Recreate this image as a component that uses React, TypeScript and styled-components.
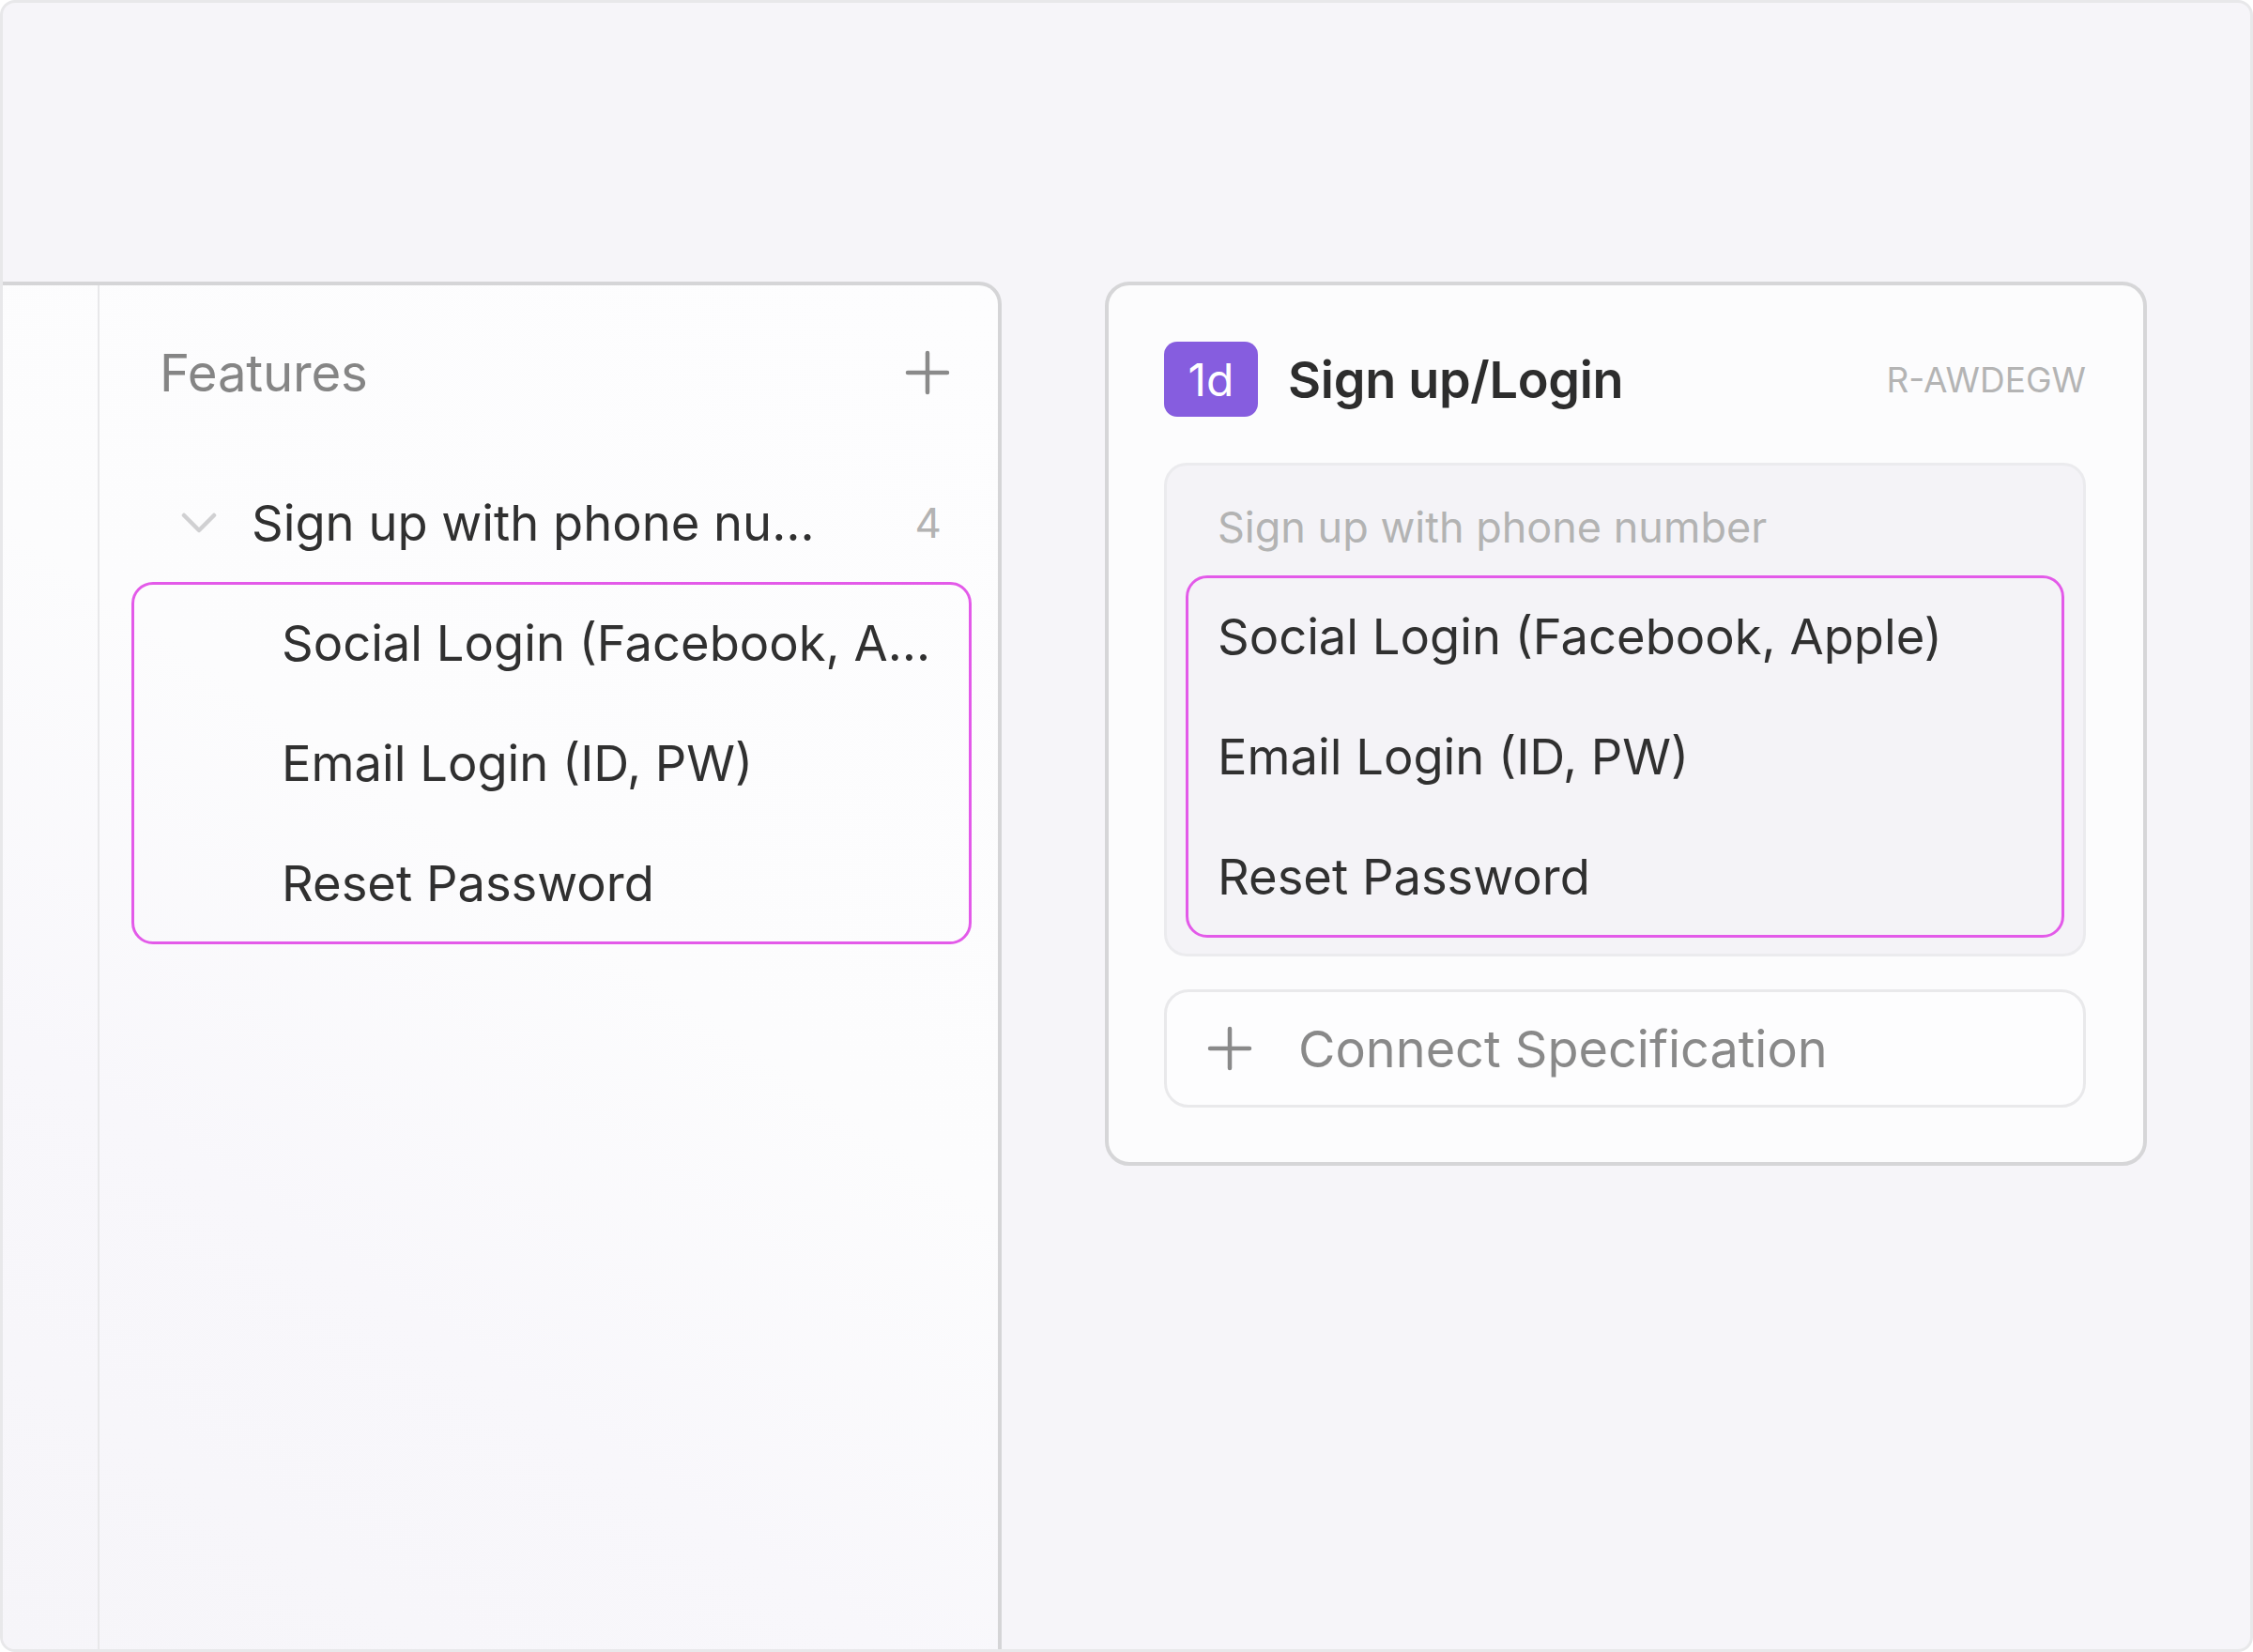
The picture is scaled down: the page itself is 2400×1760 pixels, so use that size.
import React from 'react'
import styled, { createGlobalStyle } from 'styled-components'

const GlobalStyle = createGlobalStyle`
  html, body {
    margin: 0;
    padding: 0;
    background: #ffffff;
  }
  body {
    font-family: Inter, "Noto Sans", "Liberation Sans", sans-serif;
    color: #333333;
  }
  * {
    box-sizing: border-box;
  }
`

const Frame = styled.div`
  width: 2400px;
  height: 1760px;
  border: 3px solid #e8e8ea;
  border-radius: 16px;
  background: #f6f5f9;
  overflow: hidden;
  display: flex;
  align-items: stretch;
  gap: 110px;
  padding-top: 297px;
`

const FeaturePanel = styled.div`
  width: 1064px;
  flex-shrink: 0;
  display: flex;
  border-top: 4px solid #d5d5d7;
  border-right: 4px solid #d5d5d7;
  border-top-right-radius: 24px;
  background: linear-gradient(35deg, #f6f5f9 0%, #f8f7fb 30%, #fcfcfd 55%, #fdfdfe 100%);
`

const Rail = styled.div`
  width: 103px;
  flex-shrink: 0;
  border-right: 2px solid #e8e8ea;
`

const PanelBody = styled.div`
  flex: 1;
  min-width: 0;
  display: flex;
  flex-direction: column;
  padding-top: 38px;
`

const PanelHeader = styled.div`
  height: 110px;
  display: flex;
  align-items: center;
  justify-content: space-between;
  padding: 0 51px 0 64px;
  margin-bottom: 41px;
`

const PanelTitle = styled.div`
  font-size: 54.5px;
  font-weight: 400;
  color: #858585;
  letter-spacing: -0.2px;
`

const GroupRow = styled.div`
  height: 128px;
  display: flex;
  align-items: center;
  padding: 0 60px 0 87px;
`

const Chevron = styled.svg`
  width: 38px;
  height: 24px;
  flex-shrink: 0;
  margin-right: 37px;
`

const GroupName = styled.div`
  flex: 1;
  min-width: 0;
  font-size: 52.5px;
  color: #303030;
  white-space: nowrap;
  overflow: hidden;
  text-overflow: ellipsis;
  margin-right: 100px;
`

const Count = styled.div`
  font-size: 44px;
  color: #b3b3b3;
`

const Selection = styled.div<{ $inset: string }>`
  margin: ${p => p.$inset};
  border-radius: 22px;
  outline: 3px solid #e35ae9;
  outline-offset: -2px;
`

const ItemRow = styled.div<{ $pad: number }>`
  display: block;
  height: 128px;
  line-height: 128px;
  padding-left: ${p => p.$pad}px;
  padding-right: 28px;
  font-size: 52.5px;
  color: #303030;
  white-space: nowrap;
  overflow: hidden;
  text-overflow: ellipsis;
`

const Card = styled.div`
  width: 1110px;
  flex-shrink: 0;
  align-self: flex-start;
  border: 4px solid #d6d6d8;
  border-radius: 26px;
  background: #fcfcfd;
  padding: 60px 61px 58px 59px;
`

const CardHeader = styled.div`
  height: 80px;
  display: flex;
  align-items: center;
`

const Badge = styled.div`
  width: 100px;
  height: 80px;
  border-radius: 14px;
  background: #865ddf;
  color: #ffffff;
  font-size: 48px;
  display: flex;
  align-items: center;
  justify-content: center;
  margin-right: 32px;
`

const CardTitle = styled.div`
  flex: 1;
  font-size: 54px;
  font-weight: 600;
  color: #2d2d2d;
  letter-spacing: -0.3px;
`

const CardCode = styled.div`
  font-size: 37px;
  color: #b4b4b4;
`

const SpecBox = styled.div`
  margin-top: 49px;
  border: 3px solid #ebebee;
  border-radius: 24px;
  background: #f4f3f7;
  padding: 0 21px 18px;
`

const SpecLabel = styled.div`
  font-size: 45px;
  color: #b3b3b3;
  line-height: 52px;
  padding: 40px 0 26px 33px;
`

const ConnectButton = styled.div`
  margin-top: 35px;
  height: 126px;
  border: 3px solid #e9e9eb;
  border-radius: 26px;
  background: #fdfdfe;
  display: flex;
  align-items: center;
  padding-left: 43px;
  gap: 49px;
  font-size: 54px;
  color: #898989;
`

const PlusIcon = ({ size = 48, color = '#8a8a8a' }: { size?: number; color?: string }) => (
  <svg width={size} height={size} viewBox="0 0 48 48" fill="none">
    <path d="M24 3V45M3 24H45" stroke={color} strokeWidth={4.5} strokeLinecap="round" />
  </svg>
)

const features = ['Social Login (Facebook, Apple)', 'Email Login (ID, PW)', 'Reset Password']

export default function App() {
  return (
    <>
      <GlobalStyle />
      <Frame>
        <FeaturePanel>
          <Rail />
          <PanelBody>
            <PanelHeader>
              <PanelTitle>Features</PanelTitle>
              <PlusIcon />
            </PanelHeader>
            <GroupRow>
              <Chevron viewBox="0 0 38 24" fill="none">
                <path d="M3 4L19 20L35 4" stroke="#d0d0d2" strokeWidth={4.5} strokeLinecap="round" strokeLinejoin="round" />
              </Chevron>
              <GroupName>Sign up with phone number</GroupName>
              <Count>4</Count>
            </GroupRow>
            <Selection $inset="0 29px 0 35px">
              {features.map(f => (
                <ItemRow key={f} $pad={159}>{f}</ItemRow>
              ))}
            </Selection>
          </PanelBody>
        </FeaturePanel>

        <Card>
          <CardHeader>
            <Badge>1d</Badge>
            <CardTitle>Sign up/Login</CardTitle>
            <CardCode>R-AWDEGW</CardCode>
          </CardHeader>
          <SpecBox>
            <SpecLabel>Sign up with phone number</SpecLabel>
            <Selection $inset="0">
              {features.map(f => (
                <ItemRow key={f} $pad={33}>{f}</ItemRow>
              ))}
            </Selection>
          </SpecBox>
          <ConnectButton>
            <PlusIcon />
            <span>Connect Specification</span>
          </ConnectButton>
        </Card>
      </Frame>
    </>
  )
}
